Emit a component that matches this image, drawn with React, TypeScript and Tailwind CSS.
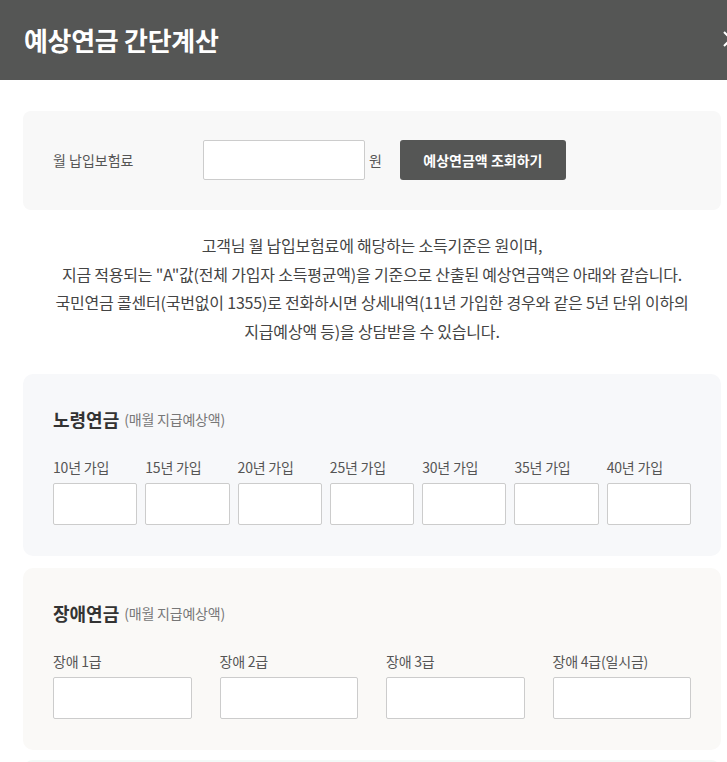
import React from "react";

const font = { fontFamily: '"Noto Sans CJK KR", "Noto Sans", sans-serif' };

function Field({ label }: { label: string }) {
  return (
    <div className="flex flex-col">
      <div className="text-[14px] leading-[18px] text-[#555] whitespace-nowrap tracking-[-0.2px]">{label}</div>
      <input className="mt-[7px] h-[42px] w-full border border-[#cccccc] bg-white rounded-[2px] outline-none" />
    </div>
  );
}

export default function App() {
  const years = ["10년 가입", "15년 가입", "20년 가입", "25년 가입", "30년 가입", "35년 가입", "40년 가입"];
  const grades = ["장애 1급", "장애 2급", "장애 3급", "장애 4급(일시금)"];
  return (
    <div className="w-[727px] h-[762px] overflow-hidden bg-white" style={font}>
      <div className="w-[744px]">
        <div className="h-[80px] bg-[#555655] flex items-center justify-between pl-[24px] pr-[5px]">
          <h1 className="text-[26px] font-bold text-white tracking-[-0.3px] leading-none">예상연금 간단계산</h1>
          <svg width="16" height="16" viewBox="0 0 16 16" className="mb-[2px]">
            <path d="M1 1 L15 15 M15 1 L1 15" stroke="white" strokeWidth="2" fill="none" />
          </svg>
        </div>
        <div className="px-[23px] pt-[31px]">
          <div className="h-[99px] bg-[#f8f8f8] rounded-[8px] flex items-center pl-[30px] pb-[1px]">
            <div className="w-[150px] text-[14px] text-[#555]">월 납입보험료</div>
            <input className="w-[162px] h-[40px] border border-[#cccccc] bg-white rounded-[2px] outline-none" />
            <span className="ml-[4px] text-[14px] text-[#555]">원</span>
            <button className="ml-[18px] w-[166px] h-[40px] bg-[#555655] text-white text-[14px] font-bold rounded-[3px]">
              예상연금액 조회하기
            </button>
          </div>
          <div className="mt-[21px] text-center text-[16px] leading-[28.5px] text-[#444] tracking-[-0.2px]">
            <p>고객님 월 납입보험료에 해당하는 소득기준은 원이며,</p>
            <p>지금 적용되는 "A"값(전체 가입자 소득평균액)을 기준으로 산출된 예상연금액은 아래와 같습니다.</p>
            <p>국민연금 콜센터(국번없이 1355)로 전화하시면 상세내역(11년 가입한 경우와 같은 5년 단위 이하의</p>
            <p>지급예상액 등)을 상담받을 수 있습니다.</p>
          </div>
          <div className="mt-[29px] h-[182px] bg-[#f7f8fa] rounded-[10px] px-[30px] pt-[33px]">
            <div className="h-[24px] flex items-center">
              <span className="text-[18px] font-bold text-[#333]">노령연금</span>
              <span className="ml-[5px] text-[14px] text-[#777] tracking-[-0.2px]">(매월 지급예상액)</span>
            </div>
            <div className="mt-[27px] grid grid-cols-7 gap-x-[8px]">
              {years.map((y) => (
                <Field key={y} label={y} />
              ))}
            </div>
          </div>
          <div className="mt-[12px] h-[182px] bg-[#faf9f7] rounded-[10px] px-[30px] pt-[33px]">
            <div className="h-[24px] flex items-center">
              <span className="text-[18px] font-bold text-[#333]">장애연금</span>
              <span className="ml-[5px] text-[14px] text-[#777] tracking-[-0.2px]">(매월 지급예상액)</span>
            </div>
            <div className="mt-[27px] grid grid-cols-4 gap-x-[28px]">
              {grades.map((g) => (
                <Field key={g} label={g} />
              ))}
            </div>
          </div>
          <div className="mt-[10px] h-[182px] bg-[#f3f9f7] rounded-[10px]" />
        </div>
      </div>
    </div>
  );
}
